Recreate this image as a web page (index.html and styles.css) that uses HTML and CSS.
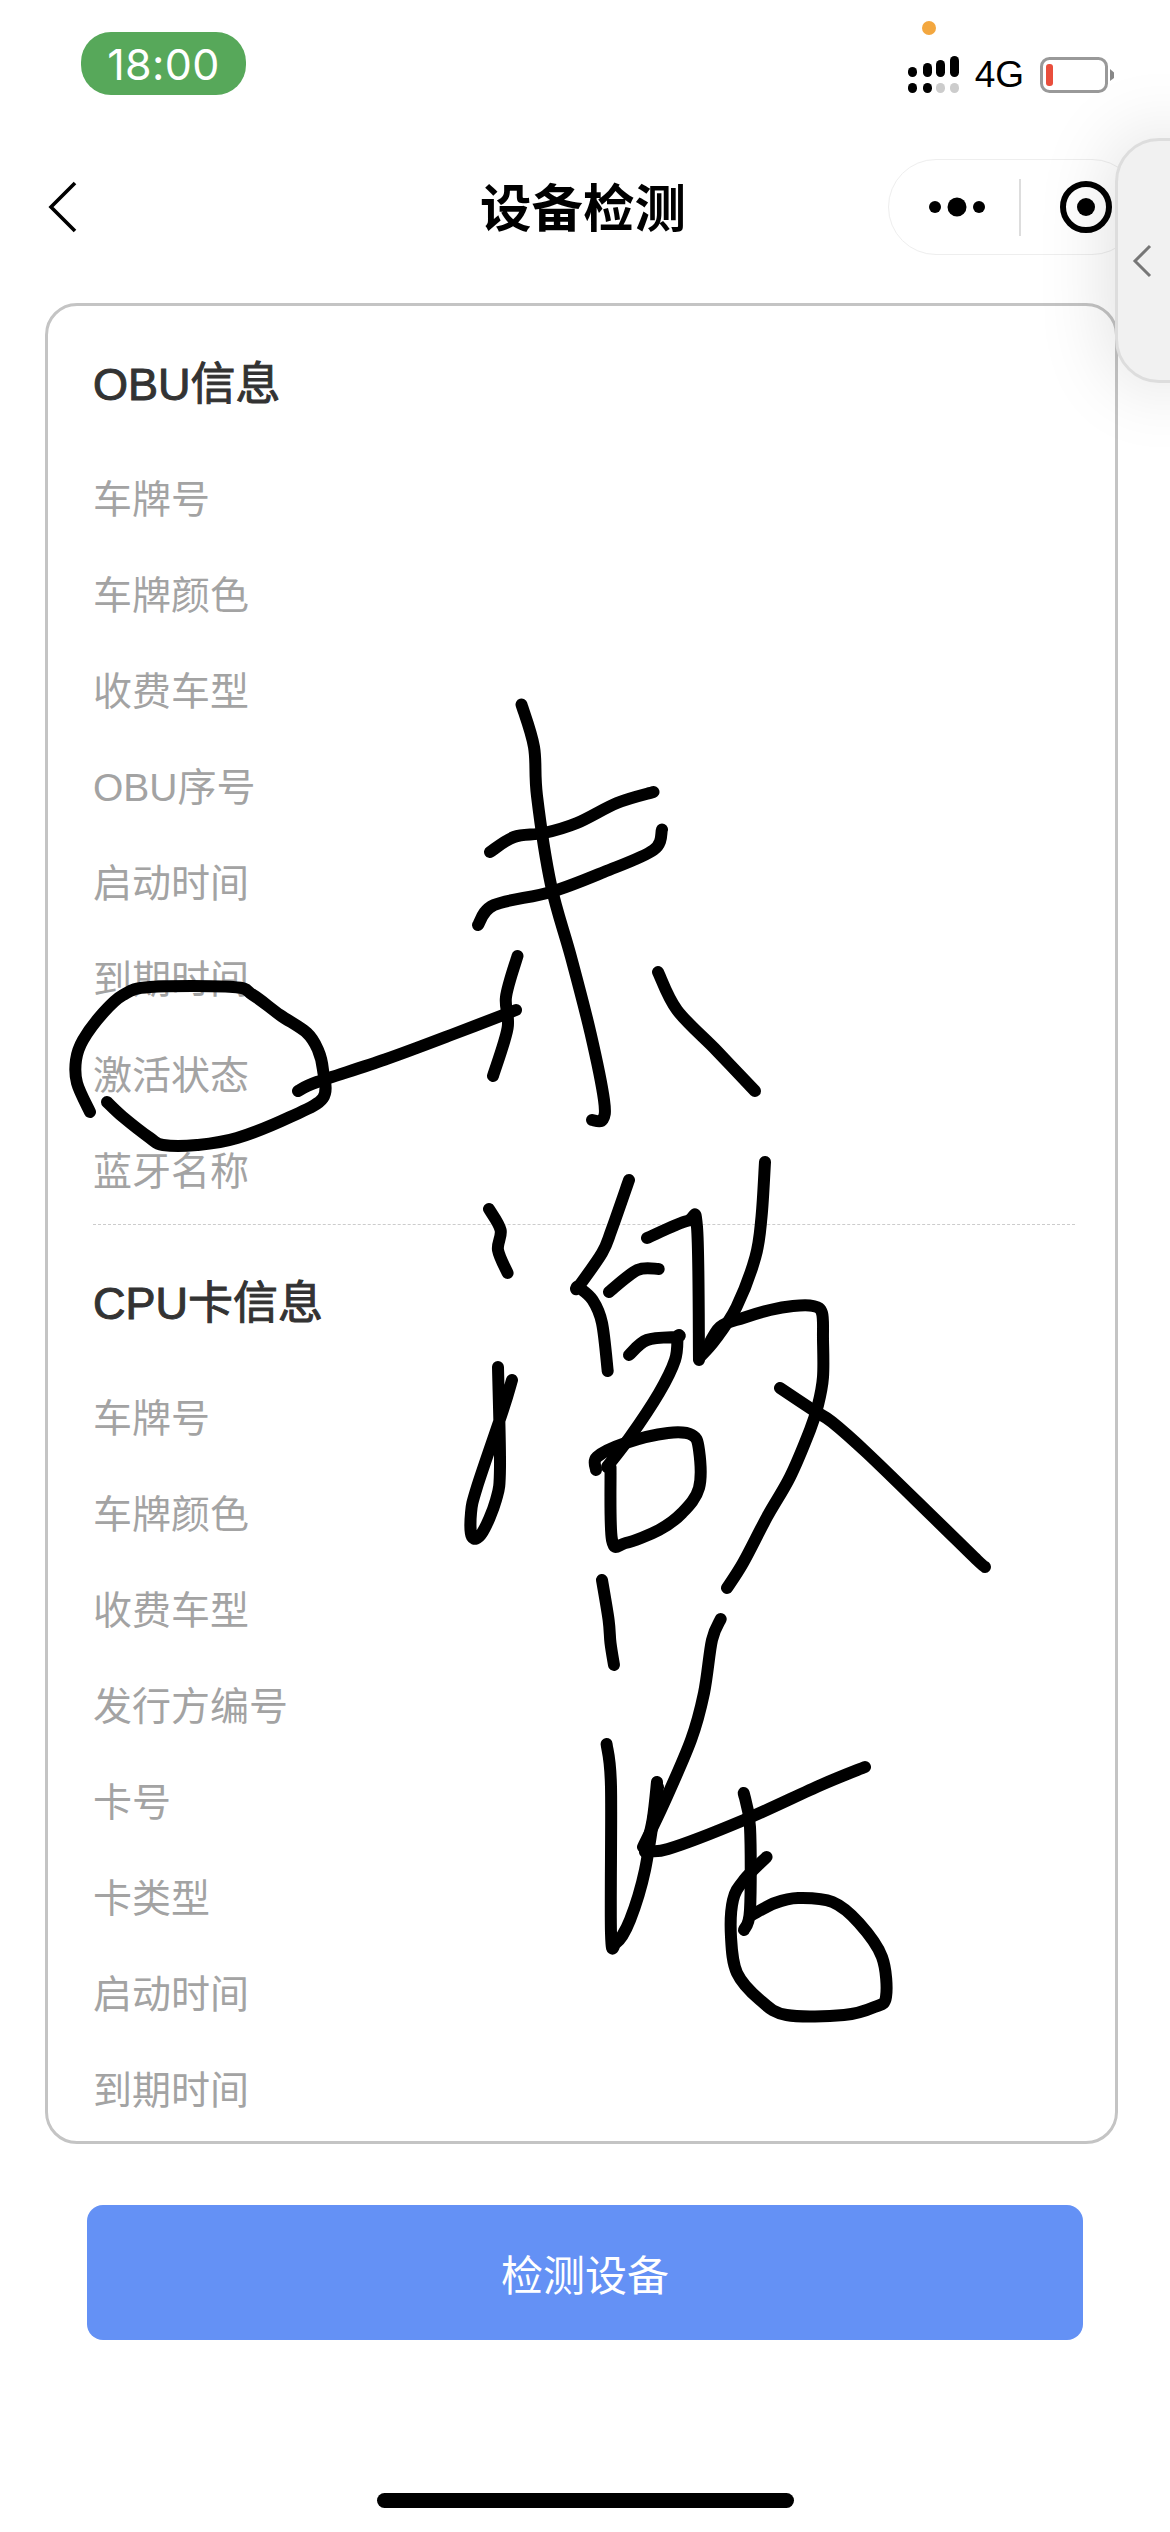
FILE: index.html
```html
<!DOCTYPE html>
<html lang="zh-CN">
<head>
<meta charset="utf-8">
<title>设备检测</title>
<link rel="stylesheet" href="styles.css">
</head>
<body>
<div class="page">
  <header class="status">
    <div class="time">18:00</div>
    <div class="status-right">
      <svg class="signal" viewBox="0 0 52 38" width="52" height="38">
        <rect x="0" y="11" width="9" height="10" rx="4.5" fill="#000"/>
        <rect x="15" y="7" width="9" height="14" rx="4.5" fill="#000"/>
        <rect x="28" y="4" width="9" height="17" rx="4.5" fill="#000"/>
        <rect x="42" y="0" width="9" height="21" rx="4.5" fill="#000"/>
        <rect x="0" y="27" width="9" height="10" rx="4.5" fill="#000"/>
        <rect x="15" y="27" width="9" height="10" rx="4.5" fill="#000"/>
        <rect x="28" y="27" width="9" height="10" rx="4.5" fill="#ccc"/>
        <rect x="42" y="27" width="9" height="10" rx="4.5" fill="#ccc"/>
      </svg>
      <span class="net">4G</span>
      <svg class="battery" viewBox="0 0 75 36" width="75" height="36">
        <rect x="1.5" y="1.5" width="65" height="33" rx="8" fill="#fff" stroke="#999" stroke-width="3"/>
        <rect x="6" y="7" width="7" height="22" rx="3" fill="#e94e3c"/>
        <path d="M70 12 L74 15.5 V21 L70 24 Z" fill="#888"/>
      </svg>
    </div>
    <span class="mic-dot"></span>
  </header>

  <nav class="nav">
    <svg class="back" viewBox="0 0 30 52" width="30" height="52">
      <path d="M27 2 L3 26 L27 50" fill="none" stroke="#000" stroke-width="3.6"/>
    </svg>
    <h1 class="title">设备检测</h1>
    <div class="capsule">
      <svg class="more" viewBox="0 0 60 20" width="60" height="20">
        <circle cx="6" cy="10" r="6" fill="#000"/>
        <circle cx="28" cy="10" r="9.5" fill="#000"/>
        <circle cx="50" cy="10" r="6" fill="#000"/>
      </svg>
      <span class="cap-div"></span>
      <svg class="target" viewBox="0 0 52 52" width="52" height="52">
        <circle cx="26" cy="26" r="23" fill="none" stroke="#000" stroke-width="6"/>
        <circle cx="26" cy="26" r="9" fill="#000"/>
      </svg>
    </div>
  </nav>

  <main class="card">
    <section class="section">
      <h2 class="heading">OBU信息</h2>
      <div class="row">车牌号</div>
      <div class="row">车牌颜色</div>
      <div class="row">收费车型</div>
      <div class="row">OBU序号</div>
      <div class="row">启动时间</div>
      <div class="row">到期时间</div>
      <div class="row">激活状态</div>
      <div class="row">蓝牙名称</div>
    </section>
    <section class="section section-cpu">
      <h2 class="heading">CPU卡信息</h2>
      <div class="row">车牌号</div>
      <div class="row">车牌颜色</div>
      <div class="row">收费车型</div>
      <div class="row">发行方编号</div>
      <div class="row">卡号</div>
      <div class="row">卡类型</div>
      <div class="row">启动时间</div>
      <div class="row">到期时间</div>
    </section>
  </main>

  <button class="action">检测设备</button>
  <div class="home-bar"></div>

  <aside class="side-tab">
    <svg viewBox="0 0 20 34" width="20" height="34">
      <path d="M18 2 L3 17 L18 32" fill="none" stroke="#777" stroke-width="3"/>
    </svg>
  </aside>

  <svg class="scribble" id="scribble" viewBox="0 0 1170 2532" width="1170" height="2532"></svg>
</div>
<script src="scribble.js"></script>
</body>
</html>
```

FILE: styles.css
```css
* { box-sizing: border-box; }
html, body { margin: 0; padding: 0; background: #fff; }
.page {
  position: relative;
  width: 1170px;
  height: 2532px;
  overflow: hidden;
  background: #fff;
  font-family: "Liberation Sans", "Noto Sans CJK SC", sans-serif;
}

/* status bar */
.status {
  position: relative;
  height: 128px;
  display: flex;
  justify-content: space-between;
  align-items: flex-start;
  padding: 32px 55px 0 81px;
}
.time {
  width: 165px;
  height: 63px;
  border-radius: 30px;
  background: #57a85a;
  color: #fff;
  font-family: Inter, "Liberation Sans", sans-serif;
  font-size: 43px;
  line-height: 64px;
  letter-spacing: 0.4px;
  text-align: center;
}
.status-right {
  display: flex;
  align-items: center;
  height: 38px;
  margin-top: 24px;
}
.signal { display: block; margin-right: 15px; }
.net {
  font-size: 37px;
  line-height: 38px;
  color: #000;
  margin-right: 16px;
}
.battery { display: block; }
.mic-dot {
  position: absolute;
  left: 922px;
  top: 21px;
  width: 14px;
  height: 14px;
  border-radius: 50%;
  background: #f3a73f;
}

/* nav */
.nav {
  height: 158px;
  margin-bottom: 17px;
  padding: 0 30px;
  display: grid;
  grid-template-columns: 1fr auto 1fr;
  align-items: center;
}
.back { display: block; margin-left: 18px; }
.title {
  margin: 3px 4px 0 0;
  font-size: 51.5px;
  font-weight: 700;
  color: #000;
  line-height: 70px;
}
.capsule {
  justify-self: end;
  width: 252px;
  height: 96px;
  border: 1.5px solid #eee;
  border-radius: 48px;
  background: #fff;
  display: flex;
  align-items: center;
  padding-left: 40px;
}
.more { display: block; }
.cap-div {
  width: 1.5px;
  height: 57px;
  background: #ddd;
  margin-left: 30px;
  margin-right: 39px;
}
.target { display: block; }

/* card */
.card {
  width: 1073px;
  height: 1841px;
  margin-left: 45px;
  border: 3px solid #c4c4c4;
  border-radius: 32px;
  padding: 34px 40px 0 45px;
  background: #fff;
}
.heading {
  margin: 0 0 22px;
  font-size: 45px;
  font-weight: 400;
  line-height: 90px;
  color: #333;
  -webkit-text-stroke: 1px #333;
}
.row {
  height: 96px;
  line-height: 96px;
  font-size: 39px;
  color: #a3a3a3;
}
.section-cpu {
  margin-top: 4px;
  padding-top: 34px;
  border-top: 1.5px dashed #ccc;
}
.section-cpu .heading { margin-bottom: 22px; }

/* button */
.action {
  display: block;
  width: 996px;
  height: 135px;
  margin: 61px 0 0 87px;
  border: 0;
  border-radius: 16px;
  background: #6491f5;
  color: #fff;
  font-family: inherit;
  font-size: 42px;
  padding: 0;
}
.home-bar {
  width: 417px;
  height: 15px;
  margin: 153px auto 0;
  border-radius: 8px;
  background: #000;
}

/* floating side tab */
.side-tab {
  position: absolute;
  left: 1115px;
  top: 138px;
  width: 100px;
  height: 245px;
  padding: 103px 0 0 14px;
  background: #f1f1f1;
  border: 3px solid #ddd;
  border-radius: 44px;
  box-shadow: 0 0 80px rgba(0, 0, 0, 0.14);
}
.side-tab svg { display: block; }

/* handwriting over the page */
.scribble {
  position: absolute;
  left: 0;
  top: 0;
  pointer-events: none;
}
.scribble path {
  fill: none;
  stroke: #000;
  stroke-width: 12;
  stroke-linecap: round;
  stroke-linejoin: round;
}
```

FILE: scribble.js
```js
// Pen strokes sampled from the annotation; drawn as smooth curves through the samples.
var strokes = [
  [521.5,704.5, 534,747, 537,796, 551,885, 571,957, 590.5,1033, 604,1100, 602.5,1120, 592,1120],
  [490,852, 514,837, 544,833, 577,823, 617,803, 653.5,792],
  [478,925, 494,905, 551,892, 604,872, 653.5,850, 662,829.5],
  [517.5,956, 506,997, 507.6,1028, 493,1076],
  [298,1091, 317,1082, 385,1059.5, 451,1035, 516,1010],
  [658,972, 677,1010, 716.5,1050.5, 755,1091],
  [90,1112, 77,1083, 76,1060, 83,1040, 103,1013, 123,995, 150,987, 233,987, 253,995, 280,1015, 307,1033, 318,1050, 323,1070, 323,1098, 290,1117, 237,1138, 197,1145, 163,1145, 150,1138, 123,1117, 107,1102],
  [489,1209, 500.6,1230, 498,1250, 507.6,1273],
  [629,1180, 611.5,1230, 602,1253, 578.4,1287, 578.4,1287, 592.6,1300, 602,1323, 607.7,1371],
  [647,1238, 687,1221, 697,1227, 699,1360],
  [765,1162, 761.5,1217, 755.4,1257, 736.5,1307, 715,1340, 699,1358],
  [706,1350, 720,1327, 743,1318, 770,1310, 793,1306, 813,1306, 822,1313, 823,1340, 823,1377, 818,1405, 810,1430, 790,1477, 767,1517, 743,1563, 727,1588],
  [780,1388, 813,1410, 832,1422, 867,1453, 933,1517, 977,1560, 985,1567],
  [609,1292, 637.4,1270, 658.7,1269],
  [629,1355, 647,1340, 677.5,1337, 677.5,1337, 675,1360, 659,1393, 630,1437, 607,1467],
  [596,1470, 597,1457, 625.6,1443, 668,1433, 692,1435, 699,1450, 699,1488, 682,1513, 659,1530, 625.6,1543, 612,1540, 610.5,1467],
  [498,1367, 500,1467, 496,1500, 482,1533, 472,1537, 471,1513, 477,1487, 503,1410, 512,1380],
  [602,1580, 608.6,1620, 610.5,1643, 614,1665],
  [720.7,1619, 712,1640, 704,1693, 691,1740, 664,1803, 643,1847],
  [657,1782, 652.6,1820, 645,1852],
  [606.6,1744, 611,1787, 611,1933, 616,1943, 630,1920, 645,1870, 658,1787],
  [645,1850, 668,1849, 744,1820, 821,1785, 865,1767],
  [743.7,1793, 750,1827, 750,1910, 744,1930],
  [766.6,1857, 744,1880, 733,1900, 731,1937, 737,1973, 760,2000, 786.5,2015, 844,2015, 874.5,2007, 886,1997, 882,1957, 859,1923, 832.5,1902, 798,1898, 775,1903, 752,1915]
];

function toPath(s) {
  var p = [];
  for (var i = 0; i < s.length; i += 2) p.push([s[i], s[i + 1]]);
  var d = 'M' + p[0][0] + ' ' + p[0][1];
  for (var j = 0; j < p.length - 1; j++) {
    var a = p[Math.max(j - 1, 0)], b = p[j], c = p[j + 1], e = p[Math.min(j + 2, p.length - 1)];
    d += ' C' + (b[0] + (c[0] - a[0]) / 6).toFixed(1) + ' ' + (b[1] + (c[1] - a[1]) / 6).toFixed(1) +
         ' ' + (c[0] - (e[0] - b[0]) / 6).toFixed(1) + ' ' + (c[1] - (e[1] - b[1]) / 6).toFixed(1) +
         ' ' + c[0] + ' ' + c[1];
  }
  return d;
}

var svg = document.getElementById('scribble');
strokes.forEach(function (s) {
  var el = document.createElementNS('http://www.w3.org/2000/svg', 'path');
  el.setAttribute('d', toPath(s));
  svg.appendChild(el);
});
```
